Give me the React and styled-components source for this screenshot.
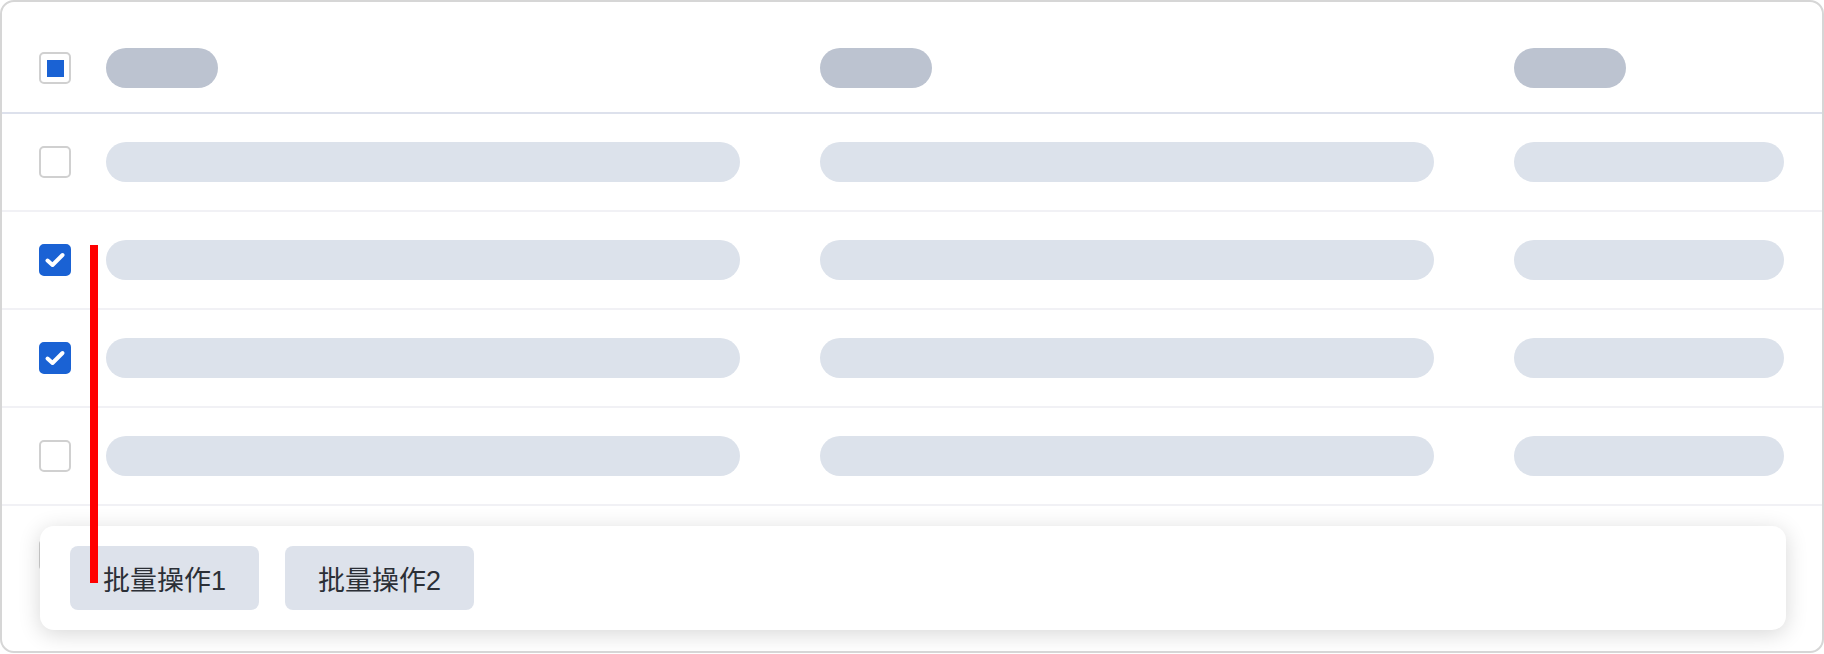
import React from "react";
import styled, { createGlobalStyle } from "styled-components";

const GlobalStyle = createGlobalStyle`
  * {
    box-sizing: border-box;
  }
  body {
    margin: 0;
    background: #ffffff;
    font-family: "Liberation Sans", "Noto Sans CJK SC", sans-serif;
  }
`;

const TableCard = styled.div`
  position: relative;
  width: 100%;
  height: 653px;
  border: 2px solid #d6d6d6;
  border-radius: 14px;
  padding-top: 22px;
  overflow: hidden;
  background: #ffffff;
`;

const Row = styled.div`
  display: grid;
  grid-template-columns: 67px 714px 694px 1fr;
  align-items: center;
  height: ${(props) => (props.$header ? 90 : 98)}px;
  padding: 0 38px 0 37px;
  border-bottom: 2px solid ${(props) => (props.$header ? "#dde1ec" : "#f1f1f5")};
  ${(props) => props.$last && "border-bottom: none;"}
`;

const Pill = styled.div`
  height: 40px;
  width: ${(props) => props.$width};
  border-radius: 20px;
  background: ${(props) => (props.$header ? "#bcc3d0" : "#dce2eb")};
`;

const Box = styled.div`
  width: 32px;
  height: 32px;
  border-radius: 5px;
  border: 2px solid ${(props) => (props.$checked ? "#1a62d4" : "#d0d0d0")};
  background: ${(props) => (props.$checked ? "#1a62d4" : "#ffffff")};
  display: flex;
  align-items: center;
  justify-content: center;
`;

const Dash = styled.span`
  width: 17px;
  height: 17px;
  background: #1a62d4;
`;

const Toolbar = styled.div`
  position: absolute;
  left: 38px;
  right: 36px;
  top: 524px;
  height: 104px;
  padding: 20px 30px;
  display: flex;
  gap: 26px;
  background: #ffffff;
  border-radius: 14px;
  box-shadow: 0 4px 22px rgba(0, 0, 0, 0.16);
`;

const ActionButton = styled.button`
  height: 64px;
  padding: 0 33px;
  border: none;
  border-radius: 8px;
  background: #dde2eb;
  color: #2b2f36;
  font-family: "Liberation Sans", "Noto Sans CJK SC", sans-serif;
  font-size: 27px;
  display: flex;
  align-items: center;
  cursor: pointer;
`;

const DropMarker = styled.div`
  position: absolute;
  left: 88px;
  top: 243px;
  width: 8px;
  height: 338px;
  background: #ff0000;
  z-index: 2;
`;

const Checkbox = ({ state }) => {
  if (state === "checked") {
    return (
      <Box $checked>
        <svg width="24" height="24" viewBox="0 0 24 24">
          <polyline
            points="4.5,12.5 9.5,17 19.5,7"
            fill="none"
            stroke="#ffffff"
            strokeWidth="4"
            strokeLinecap="round"
            strokeLinejoin="round"
          />
        </svg>
      </Box>
    );
  }
  return <Box>{state === "indeterminate" && <Dash />}</Box>;
};

const rows = ["none", "checked", "checked", "none", "none"];

const App = () => {
  return (
    <>
      <GlobalStyle />
      <TableCard>
        <Row $header>
          <Checkbox state="indeterminate" />
          <Pill $header $width="112px" />
          <Pill $header $width="112px" />
          <Pill $header $width="112px" />
        </Row>
        {rows.map((state, index) => (
          <Row key={index} $last={index === rows.length - 1}>
            <Checkbox state={state} />
            <Pill $width="634px" />
            <Pill $width="614px" />
            <Pill $width="100%" />
          </Row>
        ))}
        <Toolbar>
          <ActionButton>批量操作1</ActionButton>
          <ActionButton>批量操作2</ActionButton>
        </Toolbar>
        <DropMarker />
      </TableCard>
    </>
  );
};

export default App;
